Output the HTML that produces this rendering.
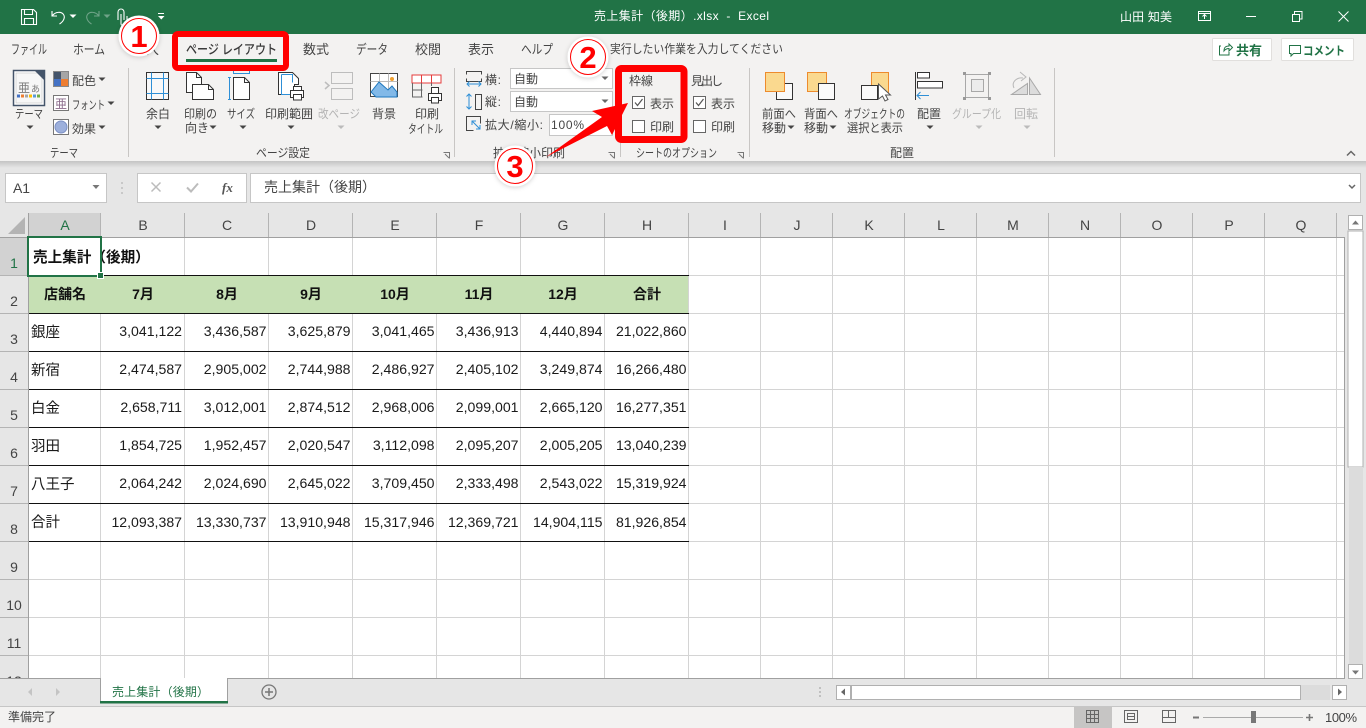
<!DOCTYPE html>
<html lang="ja"><head><meta charset="utf-8"><title>売上集計（後期）.xlsx - Excel</title>
<style>
html,body{margin:0;padding:0;width:1366px;height:728px;overflow:hidden;background:#e6e6e6}
svg{display:block;position:absolute;left:0;top:0}
text{font-family:"Liberation Sans","Noto Sans CJK JP",sans-serif;font-size:12px;fill:#444}
.t{font-size:13px}
.dis{fill:#b4b4b4}
.w{fill:#fff}
.g{fill:#217346}
.hd{font-size:14px;text-anchor:middle;fill:#444}
.rn{font-size:14px;text-anchor:middle;fill:#444}
.n{font-size:14.1px;text-anchor:end;fill:#1a1a1a}
.j{font-size:14.5px;fill:#1a1a1a}
.b{font-size:14.6px;font-weight:bold;fill:#111}
.bc{font-size:14px;font-weight:bold;fill:#111;text-anchor:middle}
.num{font-size:31px;font-weight:bold;fill:#f00;text-anchor:middle;font-family:"Liberation Sans",sans-serif}
</style></head><body>
<svg width="1366" height="728" viewBox="0 0 1366 728" xmlns="http://www.w3.org/2000/svg">
<defs>
<path id="d" d="M-3.5 -1.5h7l-3.5 3.5z"/>
<linearGradient id="sh" x1="0" y1="0" x2="0" y2="1"><stop offset="0" stop-color="#c4c4c4"/><stop offset="1" stop-color="#e6e6e6"/></linearGradient>
<filter id="cs" x="-30%" y="-30%" width="160%" height="160%"><feDropShadow dx="0" dy="1" stdDeviation="2.5" flood-color="#000" flood-opacity=".18"/></filter>
</defs>

<!-- title bar -->
<rect width="1366" height="34" fill="#217346"/>
<g fill="none" stroke="#fff" stroke-width="1.1">
<path d="M21.5 9.5h12l3 3v12h-15z"/><path d="M24.5 9.5v5h8v-5M24.5 24.5v-6h9v6"/>
<path d="M52 11v5h5M52.5 15.5c3-4 9-4 11-1 2 3 0 7-4 9.5"/>
<path stroke="#6fa388" d="M99 11v5h-5M98.500 15.500c-3-4-9-4-11-1-2 3 0 7 4 9.500"/>
<path d="M118 20v-8a3 3 0 0 1 6 0v8M121 14v10c0 2 6 2 6-1v-7"/>
</g>
<use href="#d" x="73" y="16" fill="#fff"/><use href="#d" x="107" y="16" fill="#6fa388"/>
<path d="M158 13h6v1h-6zM158 16h6.500l-3.200 3.500z" fill="#fff"/>
<text x="594" y="20" class="w" style="white-space:pre" textLength="175">売上集計（後期）.xlsx  -  Excel</text>
<text x="1120" y="21" class="w" textLength="52">山田 知美</text>
<g fill="none" stroke="#fff">
<rect x="1198.500" y="11.500" width="12" height="9"/><path d="M1198.500 13.500h12M1204.500 19v-4M1202.500 16.500l2-2 2 2"/>
<path d="M1246 16.500h10"/>
<rect x="1292.500" y="14.500" width="7" height="7"/><path d="M1294.500 14v-2.500h7.500v7.500h-2"/>
<path d="M1338.500 11.500l10 10M1348.500 11.500l-10 10"/>
</g>

<!-- ribbon bg -->
<rect y="34" width="1366" height="127" fill="#f3f2f1"/>
<rect y="161" width="1366" height="7" fill="url(#sh)"/>

<!-- tabs -->
<text x="11" y="54" class="t" textLength="36" lengthAdjust="spacingAndGlyphs">ファイル</text>
<text x="73" y="54" class="t" textLength="32" lengthAdjust="spacingAndGlyphs">ホーム</text>
<text x="133" y="54" class="t" textLength="26">挿入</text>
<text x="186" y="54" class="t" textLength="91" lengthAdjust="spacingAndGlyphs" style="fill:#3a3a3a;font-weight:500">ページ レイアウト</text>
<rect x="186" y="59" width="91" height="3" fill="#217346"/>
<text x="303" y="54" class="t" textLength="26">数式</text>
<text x="356" y="54" class="t" textLength="32" lengthAdjust="spacingAndGlyphs">データ</text>
<text x="415" y="54" class="t" textLength="26">校閲</text>
<text x="468" y="54" class="t" textLength="26">表示</text>
<text x="521" y="54" class="t" textLength="32" lengthAdjust="spacingAndGlyphs">ヘルプ</text>
<text x="610" y="53" textLength="173" lengthAdjust="spacingAndGlyphs">実行したい作業を入力してください</text>
<rect x="1212.500" y="38.500" width="59" height="22" rx="1" fill="#fff" stroke="#e1dfdd"/>
<path d="M1221 46h-1.500v9h9.500v-3M1224 51c0-4 2-5 5-5v-2l3.500 3.500-3.500 3.500v-2.500c-2 0-3.500 .5-5 2.500z" fill="none" stroke="#217346"/>
<text x="1236" y="55" class="g t" style="font-weight:bold" textLength="26">共有</text>
<rect x="1281.500" y="38.500" width="72" height="22" rx="1" fill="#fff" stroke="#e1dfdd"/>
<path d="M1289.500 45.500h11v8h-7l-2.500 2.500v-2.500h-1.500z" fill="none" stroke="#217346"/>
<text x="1303" y="55" class="g" style="font-weight:bold" textLength="42" lengthAdjust="spacingAndGlyphs">コメント</text>

<!-- separators -->
<path d="M128.500 68v89M454.500 68v89M620.500 68v89M749.500 68v89M1054.500 68v89" stroke="#c8c6c4"/>

<!-- theme group -->
<rect x="13.500" y="70.500" width="31" height="35" fill="#fff" stroke="#44546a" stroke-width="1.500"/>
<rect x="16" y="73" width="26" height="30" fill="#f7f7f7" stroke="#bbb" stroke-width=".5"/>
<path d="M35 71h9v9z" fill="#44546a"/>
<text x="18" y="92" style="font-size:12px;fill:#7a7a7a">亜</text><text x="31" y="92" style="font-size:9px;fill:#7a7a7a">あ</text>
<g><rect x="17" y="94.500" width="3" height="3" fill="#4472c4"/><rect x="21" y="94.500" width="3" height="3" fill="#ed7d31"/><rect x="25" y="94.500" width="3" height="3" fill="#a5a5a5"/><rect x="29" y="94.500" width="3" height="3" fill="#ffc000"/><rect x="33" y="94.500" width="3" height="3" fill="#5b9bd5"/><rect x="37" y="94.500" width="3" height="3" fill="#70ad47"/></g>
<text x="15" y="118" textLength="28" lengthAdjust="spacingAndGlyphs">テーマ</text>
<use href="#d" x="30" y="127" fill="#444"/>
<rect x="53.500" y="71.500" width="15" height="15" fill="#fff" stroke="#888"/>
<rect x="54" y="72" width="7" height="7" fill="#44546a"/><rect x="61" y="72" width="7" height="7" fill="#a5a5a5"/><rect x="54" y="79" width="7" height="7" fill="#4472c4"/><rect x="61" y="79" width="7" height="7" fill="#ed7d31"/>
<text x="72" y="85" textLength="24">配色</text><use href="#d" x="102" y="79" fill="#444"/>
<rect x="53.500" y="95.500" width="15" height="15" fill="#fff" stroke="#777"/>
<text x="55" y="108" style="font-size:12px;fill:#8a6a8a">亜</text>
<text x="72" y="109" textLength="33" lengthAdjust="spacingAndGlyphs">フォント</text><use href="#d" x="111" y="103" fill="#444"/>
<rect x="53.500" y="119.500" width="15" height="15" fill="#fff" stroke="#777"/>
<circle cx="61" cy="127" r="6" fill="#9db0dc" stroke="#7b8fc4"/>
<text x="72" y="133" textLength="24">効果</text><use href="#d" x="102" y="127" fill="#444"/>
<text x="50" y="157" textLength="28" lengthAdjust="spacingAndGlyphs">テーマ</text>

<!-- page setup icons -->
<g fill="#fff" stroke="#333" stroke-width="1">
<rect x="146.500" y="72.500" width="22" height="27" fill="#f8f8f8"/>
<path d="M146.500 78.500h22M146.500 93.500h22M151.500 72.500v27M163.500 72.500v27" stroke="#2e8fd6" fill="none"/>
<path d="M186.500 72.500h10l5 5v15h-15z"/><path d="M196.500 72.500v5h5" fill="none"/>
<path d="M192.500 84.500h16l5 5v10h-21z"/><path d="M208.500 84.500v5h5" fill="none"/>
<path d="M233.500 77.500h11l5 5v17h-16z"/><path d="M244.500 77.500v5h5" fill="none"/>
<path d="M233.500 68.500v5h16v-5M229.500 77.500v22M228 77.500h3M228 99.500h3" stroke="#2e8fd6" fill="none"/>
<path d="M278.500 72.500h14l6 6v6h-4v10h-16z"/>
<path d="M281.500 74.500h11v8M281.500 74.500v20h12" stroke="#2e8fd6" fill="none"/>
<rect x="290.500" y="90.500" width="13" height="7"/><rect x="293.500" y="86.500" width="8" height="4"/><rect x="293.500" y="94.500" width="8" height="5.500"/>
</g>
<g fill="none" stroke="#bdbdbd"><rect x="331.500" y="72.500" width="21" height="11" fill="#f3f2f1"/><rect x="331.500" y="88.500" width="21" height="11"/><path d="M325 82l4 3.500-4 3.500" stroke-width="1.500"/></g>
<rect x="370.500" y="73.500" width="27" height="23" fill="#fff" stroke="#444"/>
<path d="M370.500 81.500h27M379.500 73.500v23M388.500 73.500v23" stroke="#bbb"/>
<path d="M371 92l8-10 9 8 4-4 5 6v5h-21l-2-2z" fill="#82b9e8" stroke="#1e78bf"/>
<circle cx="392" cy="79" r="2" fill="#f0a030"/>
<rect x="412" y="75" width="29" height="8" fill="#fff" stroke="#e43c3c"/><path d="M421.500 75v8M431.500 75v8" stroke="#e43c3c"/>
<path d="M412.500 83v14h10M412.500 90h10M421.500 83v14M431.500 83v3" fill="none" stroke="#666"/>
<g fill="#fff" stroke="#333"><rect x="428.500" y="93.500" width="13" height="7"/><rect x="431.500" y="87.500" width="7" height="6"/><rect x="431.500" y="97.500" width="7" height="5.500"/></g>
<text x="146" y="118" textLength="24">余白</text><use href="#d" x="158" y="127" fill="#444"/>
<text x="184" y="118" textLength="33" lengthAdjust="spacingAndGlyphs">印刷の</text>
<text x="185" y="132" textLength="24">向き</text><use href="#d" x="213" y="127" fill="#444"/>
<text x="227" y="118" textLength="28" lengthAdjust="spacingAndGlyphs">サイズ</text><use href="#d" x="243" y="127" fill="#444"/>
<text x="265" y="118" textLength="48">印刷範囲</text><use href="#d" x="291" y="127" fill="#444"/>
<text x="318" y="118" class="dis" textLength="42" lengthAdjust="spacingAndGlyphs">改ページ</text><use href="#d" x="341" y="127" fill="#bbb"/>
<text x="372" y="118" textLength="24">背景</text>
<text x="415" y="118" textLength="24">印刷</text>
<text x="408" y="133" textLength="35" lengthAdjust="spacingAndGlyphs">タイトル</text>
<text x="256" y="157" textLength="54" lengthAdjust="spacingAndGlyphs">ページ設定</text>
<path d="M443.500 152.500h6v6M445 154l4 4" fill="none" stroke="#777"/>

<!-- scale group -->
<g fill="none" stroke="#444"><path d="M466.500 74.500v-3h15v3M466.500 78.500v3h15v-3"/></g>
<path d="M467 84h14M469.500 81.500l-2.500 2.500 2.500 2.500M478.500 81.500l2.500 2.500-2.500 2.500" fill="none" stroke="#2e8fd6"/>
<text x="485" y="84" textLength="16">横:</text>
<rect x="510.500" y="68.500" width="102" height="20" fill="#fff" stroke="#c6c6c6"/>
<text x="514" y="83" textLength="24">自動</text><use href="#d" x="605" y="78" fill="#666"/>
<path d="M469 94v15M466.500 96.500l2.500-2.500 2.500 2.500M466.500 106.500l2.500 2.500 2.500-2.500" fill="none" stroke="#2e8fd6"/>
<rect x="475.500" y="94.500" width="6" height="15" fill="none" stroke="#444"/>
<text x="485" y="106" textLength="16">縦:</text>
<rect x="510.500" y="91.500" width="102" height="20" fill="#fff" stroke="#c6c6c6"/>
<text x="514" y="106" textLength="24">自動</text><use href="#d" x="605" y="101" fill="#666"/>
<path d="M473.500 130.500h-7v-14h14v7" fill="none" stroke="#444"/>
<path d="M472 121l8 8M472 125v-4h4M480 125v4h-4" fill="none" stroke="#2e8fd6"/>
<text x="485" y="129" textLength="58">拡大/縮小:</text>
<rect x="549.500" y="114.500" width="63" height="21" fill="#fff" stroke="#c6c6c6"/>
<text x="551" y="129" textLength="33">100%</text><use href="#d" x="605" y="125" fill="#666"/>
<text x="493" y="157" textLength="72">拡大縮小印刷</text>
<path d="M608.500 152.500h6v6M610 154l4 4" fill="none" stroke="#777"/>

<!-- sheet options -->
<text x="629" y="85" textLength="24">枠線</text>
<text x="691" y="85" textLength="32">見出し</text>
<g fill="#fff" stroke="#666"><rect x="632.500" y="96.500" width="12" height="12"/><rect x="632.500" y="120.500" width="12" height="12"/><rect x="693.500" y="96.500" width="12" height="12"/><rect x="693.500" y="120.500" width="12" height="12"/></g>
<path d="M635 102.500l2.500 3 5-6.500M696 102.500l2.500 3 5-6.500" fill="none" stroke="#555" stroke-width="1.200"/>
<text x="650" y="108" textLength="24">表示</text><text x="650" y="131" textLength="24">印刷</text>
<text x="711" y="108" textLength="24">表示</text><text x="711" y="131" textLength="24">印刷</text>
<text x="636" y="157" textLength="81" lengthAdjust="spacingAndGlyphs">シートのオプション</text>
<path d="M737.500 152.500h6v6M739 154l4 4" fill="none" stroke="#777"/>

<!-- arrange -->
<g stroke="#333" fill="#fafafa">
<rect x="776.500" y="83.500" width="16" height="16"/>
<rect x="765.500" y="72.500" width="19" height="19" fill="#fad98f" stroke="#ed8b2d"/>
<rect x="807.500" y="72.500" width="19" height="19" fill="#fad98f" stroke="#ed8b2d"/>
<rect x="818.500" y="83.500" width="16" height="16"/>
<rect x="871.500" y="72.500" width="17" height="20" fill="#fad98f" stroke="#ed8b2d"/>
<rect x="861.500" y="85.500" width="16" height="14"/>
<path d="M878.500 84v15l4-3 2.500 5 3-1.500-2.500-4.500h5z" fill="#fff" stroke="#555"/>
</g>
<path d="M915.500 72v28" stroke="#333"/>
<rect x="917.500" y="72.500" width="12" height="5.500" fill="#fff" stroke="#333"/><rect x="917.500" y="81.500" width="25" height="6.500" fill="#fff" stroke="#333"/>
<path d="M917 95.500h12M920.500 92l-3.500 3.500 3.500 3.500" fill="none" stroke="#2e8fd6"/>
<g fill="none" stroke="#a8a8a8"><rect x="965.500" y="74.500" width="23" height="23"/><rect x="971.500" y="79.500" width="12" height="12" fill="#ececec"/></g>
<g fill="#999"><rect x="963" y="72" width="3" height="3"/><rect x="988" y="72" width="3" height="3"/><rect x="963" y="97" width="3" height="3"/><rect x="988" y="97" width="3" height="3"/></g>
<path d="M1011.500 94.500l16-11v11zM1029.500 78v16.500h11z" fill="#dcdcdc" stroke="#a8a8a8"/>
<path d="M1014 88c-3-6 3-11 9-10M1020 72l6 5-5 4" fill="none" stroke="#b8b8b8"/>
<text x="762" y="118" textLength="34" lengthAdjust="spacingAndGlyphs">前面へ</text>
<text x="762" y="132" textLength="24">移動</text><use href="#d" x="791" y="127" fill="#444"/>
<text x="804" y="118" textLength="34" lengthAdjust="spacingAndGlyphs">背面へ</text>
<text x="804" y="132" textLength="24">移動</text><use href="#d" x="833" y="127" fill="#444"/>
<text x="844" y="118" textLength="61" lengthAdjust="spacingAndGlyphs">オブジェクトの</text>
<text x="847" y="132" textLength="56" lengthAdjust="spacingAndGlyphs">選択と表示</text>
<text x="917" y="118" textLength="24">配置</text><use href="#d" x="930" y="127" fill="#444"/>
<text x="952" y="118" class="dis" textLength="49" lengthAdjust="spacingAndGlyphs">グループ化</text><use href="#d" x="979" y="127" fill="#bbb"/>
<text x="1014" y="118" class="dis" textLength="24">回転</text><use href="#d" x="1027" y="127" fill="#bbb"/>
<text x="890" y="157" textLength="24">配置</text>
<path d="M1347 155.500l4-4 4 4" fill="none" stroke="#666" stroke-width="1.500"/>

<!-- formula bar -->
<rect y="168" width="1366" height="45" fill="#e6e6e6"/>
<rect x="5.500" y="173.500" width="101" height="29" fill="#fff" stroke="#c6c6c6"/>
<text x="13" y="193" style="font-size:14px" textLength="17">A1</text>
<path d="M92.500 185h7l-3.500 4z" fill="#777"/>
<path d="M122 182v2M122 187v2M122 192v2" stroke="#aaa"/>
<rect x="137.500" y="173.500" width="109" height="29" fill="#fff" stroke="#c6c6c6"/>
<path d="M151.500 182.500l9 9M160.500 182.500l-9 9" stroke="#bcbcbc" stroke-width="1.500"/>
<path d="M187 187.500l4 4 7-8" fill="none" stroke="#bcbcbc" stroke-width="2"/>
<text x="222" y="192" style="font-family:'Liberation Serif',serif;font-style:italic;font-weight:bold;font-size:13px;fill:#555">fx</text>
<rect x="250.500" y="173.500" width="1110" height="29" fill="#fff" stroke="#c6c6c6"/>
<text x="264" y="192" style="font-size:14px" textLength="112">売上集計（後期）</text>
<path d="M1349 185l3 3 3-3" fill="none" stroke="#666" stroke-width="1.500"/>

<!-- headers -->
<rect y="213" width="1366" height="466" fill="#e6e6e6"/>
<rect x="29" y="213" width="72" height="24" fill="#d2d2d2"/>
<rect y="237" width="28" height="38" fill="#d2d2d2"/>
<path d="M25 217v17h-17z" fill="#b4b4b4"/>
<rect x="29" y="237" width="1315" height="441" fill="#fff"/>
<rect x="29" y="276" width="660" height="37" fill="#c6e0b4"/>

<!-- grid -->
<path d="M100.500 237v39M184.500 237v39M268.500 237v39M352.500 237v39M436.500 237v39M520.500 237v39M604.500 237v39M688.500 237v39M100.500 313v365M184.500 313v365M268.500 313v365M352.500 313v365M436.500 313v365M520.500 313v365M604.500 313v365M688.500 237v441M760.500 237v441M832.500 237v441M904.500 237v441M976.500 237v441M1048.500 237v441M1120.500 237v441M1192.500 237v441M1264.500 237v441M1336.500 237v441" stroke="#d4d4d4"/>
<path d="M689 275.500h655M689 313.500h655M689 351.500h655M689 389.500h655M689 427.500h655M689 465.500h655M689 503.500h655M689 541.500h655M29 579.500h1315M29 617.500h1315M29 655.500h1315" stroke="#d4d4d4"/>
<path d="M29 275.500h660M29 313.500h660M29 351.500h660M29 389.500h660M29 427.500h660M29 465.500h660M29 503.500h660M29 541.500h660" stroke="#111"/>
<path d="M100.500 213v24M184.500 213v24M268.500 213v24M352.500 213v24M436.500 213v24M520.500 213v24M604.500 213v24M688.500 213v24M760.500 213v24M832.500 213v24M904.500 213v24M976.500 213v24M1048.500 213v24M1120.500 213v24M1192.500 213v24M1264.500 213v24M1336.500 213v24" stroke="#b4b4b4"/>
<path d="M0 275.500h28M0 313.500h28M0 351.500h28M0 389.500h28M0 427.500h28M0 465.500h28M0 503.500h28M0 541.500h28M0 579.500h28M0 617.500h28M0 655.500h28" stroke="#b4b4b4"/>
<path d="M0 237.500h1344.500v441M28.500 213v465M0 678.500h1344" fill="none" stroke="#a0a0a0"/>

<text x="65" y="230" class="hd g" style="fill:#217346">A</text>
<text x="143" y="230" class="hd">B</text><text x="227" y="230" class="hd">C</text><text x="311" y="230" class="hd">D</text><text x="395" y="230" class="hd">E</text><text x="479" y="230" class="hd">F</text><text x="563" y="230" class="hd">G</text><text x="647" y="230" class="hd">H</text><text x="725" y="230" class="hd">I</text><text x="797" y="230" class="hd">J</text><text x="869" y="230" class="hd">K</text><text x="941" y="230" class="hd">L</text><text x="1013" y="230" class="hd">M</text><text x="1085" y="230" class="hd">N</text><text x="1157" y="230" class="hd">O</text><text x="1229" y="230" class="hd">P</text><text x="1301" y="230" class="hd">Q</text>

<text x="14" y="268" class="rn" style="fill:#217346">1</text><text x="14" y="306" class="rn">2</text><text x="14" y="344" class="rn">3</text><text x="14" y="382" class="rn">4</text><text x="14" y="420" class="rn">5</text><text x="14" y="458" class="rn">6</text><text x="14" y="496" class="rn">7</text><text x="14" y="534" class="rn">8</text><text x="14" y="572" class="rn">9</text><text x="14" y="610" class="rn">10</text><text x="14" y="648" class="rn">11</text>
<svg x="0" y="660" width="28" height="18"><text x="14" y="26" class="rn">12</text></svg>

<!-- cells -->
<text x="33" y="262" class="b">売上集計（後期）</text>
<text x="65" y="299" class="bc">店舗名</text><text x="143" y="299" class="bc">7月</text><text x="227" y="299" class="bc">8月</text><text x="311" y="299" class="bc">9月</text><text x="395" y="299" class="bc">10月</text><text x="479" y="299" class="bc">11月</text><text x="563" y="299" class="bc">12月</text><text x="647" y="299" class="bc">合計</text>

<text x="31" y="337" class="j">銀座</text><text x="182" y="336" class="n">3,041,122</text><text x="266.500" y="336" class="n">3,436,587</text><text x="350.500" y="336" class="n">3,625,879</text><text x="434.500" y="336" class="n">3,041,465</text><text x="518.500" y="336" class="n">3,436,913</text><text x="602.500" y="336" class="n">4,440,894</text><text x="686.500" y="336" class="n">21,022,860</text>
<text x="31" y="375" class="j">新宿</text><text x="182" y="374" class="n">2,474,587</text><text x="266.500" y="374" class="n">2,905,002</text><text x="350.500" y="374" class="n">2,744,988</text><text x="434.500" y="374" class="n">2,486,927</text><text x="518.500" y="374" class="n">2,405,102</text><text x="602.500" y="374" class="n">3,249,874</text><text x="686.500" y="374" class="n">16,266,480</text>
<text x="31" y="413" class="j">白金</text><text x="182" y="412" class="n">2,658,711</text><text x="266.500" y="412" class="n">3,012,001</text><text x="350.500" y="412" class="n">2,874,512</text><text x="434.500" y="412" class="n">2,968,006</text><text x="518.500" y="412" class="n">2,099,001</text><text x="602.500" y="412" class="n">2,665,120</text><text x="686.500" y="412" class="n">16,277,351</text>
<text x="31" y="451" class="j">羽田</text><text x="182" y="450" class="n">1,854,725</text><text x="266.500" y="450" class="n">1,952,457</text><text x="350.500" y="450" class="n">2,020,547</text><text x="434.500" y="450" class="n">3,112,098</text><text x="518.500" y="450" class="n">2,095,207</text><text x="602.500" y="450" class="n">2,005,205</text><text x="686.500" y="450" class="n">13,040,239</text>
<text x="31" y="489" class="j">八王子</text><text x="182" y="488" class="n">2,064,242</text><text x="266.500" y="488" class="n">2,024,690</text><text x="350.500" y="488" class="n">2,645,022</text><text x="434.500" y="488" class="n">3,709,450</text><text x="518.500" y="488" class="n">2,333,498</text><text x="602.500" y="488" class="n">2,543,022</text><text x="686.500" y="488" class="n">15,319,924</text>
<text x="31" y="527" class="j">合計</text><text x="182" y="527" class="n">12,093,387</text><text x="266.500" y="527" class="n">13,330,737</text><text x="350.500" y="527" class="n">13,910,948</text><text x="434.500" y="527" class="n">15,317,946</text><text x="518.500" y="527" class="n">12,369,721</text><text x="602.500" y="527" class="n">14,904,115</text><text x="686.500" y="527" class="n">81,926,854</text>

<!-- selection -->
<rect x="28" y="237" width="73" height="39" fill="none" stroke="#217346" stroke-width="2"/>
<rect x="97.500" y="272.500" width="6" height="6" fill="#217346" stroke="#fff"/>

<!-- vscroll -->
<rect x="1345" y="213" width="21" height="466" fill="#e6e6e6"/>
<rect x="1348.500" y="215.500" width="14" height="14" fill="#fff" stroke="#b0b0b0"/>
<path d="M1352 224.500h7l-3.500-4z" fill="#777"/>
<rect x="1348" y="231" width="15" height="236" fill="#fff" stroke="#b0b0b0"/>
<rect x="1349" y="467" width="14" height="197" fill="#dcdcdc"/>
<rect x="1348.500" y="664.500" width="14" height="14" fill="#fff" stroke="#b0b0b0"/>
<path d="M1352 670.500h7l-3.500 4z" fill="#777"/>

<!-- sheet tab bar -->
<rect y="679" width="1366" height="27" fill="#e6e6e6"/>
<path d="M0 678.500h100M228 678.500h1117" stroke="#a0a0a0"/>
<path d="M32 688v8l-4-4zM56 688v8l4-4z" fill="#c4c4c4"/>
<path d="M100.500 678.500v24M227.500 678.500v24" stroke="#a0a0a0"/>
<rect x="101" y="678" width="126" height="23" fill="#fff"/>
<rect x="100" y="701" width="128" height="2.500" fill="#217346"/>
<text x="112" y="696" class="g" textLength="97">売上集計（後期）</text>
<circle cx="269" cy="692" r="7" fill="none" stroke="#777" stroke-width="1.300"/>
<path d="M265 692h8M269 688v8" stroke="#777" stroke-width="1.500"/>
<path d="M820 687v2M820 691v2M820 695v2" stroke="#999"/>
<rect x="836.500" y="685.500" width="14" height="14" fill="#fff" stroke="#b0b0b0"/>
<path d="M845 688.500v7l-4-3.500z" fill="#666"/>
<rect x="851.500" y="685.500" width="449" height="14" fill="#fff" stroke="#b0b0b0"/>
<rect x="1301" y="685" width="29" height="15" fill="#dcdcdc"/>
<rect x="1332.500" y="685.500" width="14" height="14" fill="#fff" stroke="#b0b0b0"/>
<path d="M1338 688.500v7l4-3.500z" fill="#666"/>

<!-- status bar -->
<rect y="706" width="1366" height="22" fill="#f3f2f1"/>
<path d="M0 706.500h1366" stroke="#c6c6c6"/>
<text x="8" y="721" textLength="48">準備完了</text>
<rect x="1074" y="707" width="38" height="21" fill="#c6c5c4"/>
<path d="M1086.500 710.500h12v12h-12zM1090.500 710.500v12M1094.500 710.500v12M1086.500 714.500h12M1086.500 718.500h12" fill="none" stroke="#666"/>
<path d="M1124.500 710.500h13v12h-13zM1127.500 713.500h7v6h-7zM1127.500 716.500h7" fill="none" stroke="#666"/>
<path d="M1162.500 710.500h13v12h-13zM1162.500 717.500h6v-7M1168.500 717.500h7" fill="none" stroke="#666"/>
<rect x="1193" y="716.500" width="6" height="2" fill="#777"/>
<path d="M1203 717.500h100" stroke="#aaa"/>
<rect x="1251" y="711" width="5" height="12" fill="#777"/>
<path d="M1306 717.500h7M1309.500 714v7" stroke="#777" stroke-width="1.600"/>
<text x="1325" y="722" style="font-size:13px" textLength="32">100%</text>

<!-- annotations -->
<rect x="175" y="34" width="111" height="34" rx="3" fill="none" stroke="#f00" stroke-width="6"/>
<rect x="618.500" y="68.500" width="65.500" height="71" rx="3" fill="none" stroke="#f00" stroke-width="7"/>
<path d="M546 157L602 117 592 111 628 103 612 135 607 126z" fill="#f00"/>
<g filter="url(#cs)"><circle cx="139" cy="36" r="20.500" fill="#fff"/></g>
<circle cx="139" cy="36" r="17.500" fill="#fff" stroke="#f00" stroke-width="1"/>
<text x="139" y="47" class="num">1</text>
<g filter="url(#cs)"><circle cx="588" cy="57" r="20.500" fill="#fff"/></g>
<circle cx="588" cy="57" r="17.500" fill="#fff" stroke="#f00" stroke-width="1"/>
<text x="588" y="68" class="num">2</text>
<g filter="url(#cs)"><circle cx="515" cy="166" r="20.500" fill="#fff"/></g>
<circle cx="515" cy="166" r="17.500" fill="#fff" stroke="#f00" stroke-width="1"/>
<text x="515" y="177" class="num">3</text>
</svg>
</body></html>
